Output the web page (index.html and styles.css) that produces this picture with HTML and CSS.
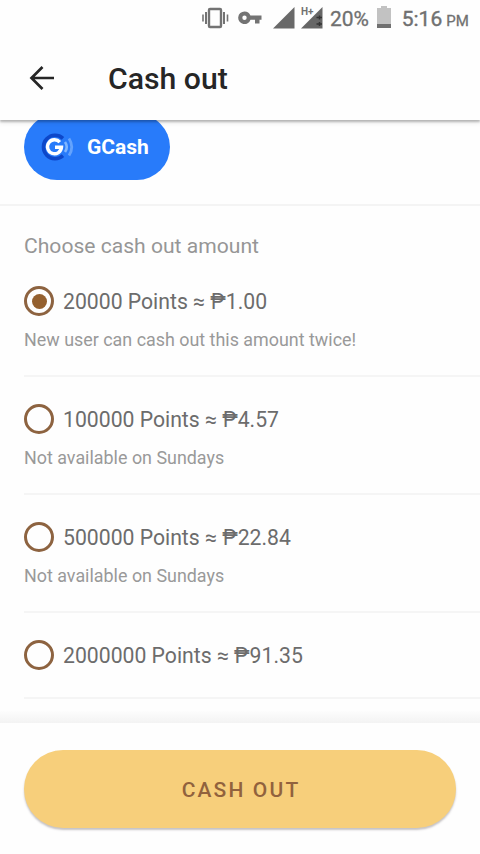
FILE: index.html
```html
<!DOCTYPE html>
<html lang="en">
<head>
<meta charset="utf-8">
<title>Cash out</title>
<link rel="stylesheet" href="styles.css">
</head>
<body>
<div class="screen">
  <header class="top">
    <div class="status">
      <svg class="i-vibrate" width="28" height="22" viewBox="0 0 28 22">
        <rect x="8" y="2" width="12" height="18" rx="1" fill="none" stroke="#737373" stroke-width="2.400"/>
        <path d="M5 5V17M23 5V17" stroke="#737373" stroke-width="2"/>
        <path d="M2 7.500V14.500M26.500 7.500V14.500" stroke="#737373" stroke-width="1.600"/>
      </svg>
      <svg class="i-key" width="24" height="14" viewBox="0 0 24 14">
        <path fill="#737373" fill-rule="evenodd" d="M6.500.500a6.300 6.300 0 0 1 5.900 4H23.500V8.700H21.500V12.500H17V8.700H12.500A6.300 6.300 0 1 1 6.500.500ZM6.500 4.600a2.200 2.200 0 1 0 0 4.400a2.200 2.200 0 0 0 0-4.400Z"/>
      </svg>
      <svg class="i-signal" width="22" height="22" viewBox="0 0 22 22"><path d="M0 21.500L21.500 0V21.500Z" fill="#696969"/></svg>
      <span class="network">
        <svg width="22" height="22" viewBox="0 0 22 22"><path d="M0 21.500L21.500 0V21.500Z" fill="#666"/><path d="M15.500 10.500H21M18.500 8.500v4M15.500 17H21M18.500 15v4" stroke="#333" stroke-width="1.500"/></svg>
        <span class="network-label">H+</span>
      </span>
      <span class="percent">20%</span>
      <svg class="i-battery" width="14" height="22" viewBox="0 0 14 22"><path d="M0 2h4V0h6v2h4v20H0Z" fill="#c2c2c2"/><path d="M0 18h14v4H0Z" fill="#707070"/></svg>
      <span class="clock">5:16</span><span class="meridiem">PM</span>
    </div>
    <div class="toolbar">
      <svg class="i-back" width="26" height="26" viewBox="0 0 26 26"><path d="M25 13H2.500M13.500 2L2.500 13L13.500 24" fill="none" stroke="#262626" stroke-width="2.700"/></svg>
      <h1 class="title">Cash out</h1>
    </div>
  </header>
  <main class="content">
    <section class="method">
      <div class="pill">
        <svg class="i-gcash" width="34" height="28" viewBox="0 0 34 28">
          <path d="M22 5.300A11.700 11.700 0 1 0 22 22.700" fill="none" stroke="#0d47c9" stroke-width="3.600"/>
          <path d="M18.800 9.200A7 7 0 1 0 20.500 14.200H14" fill="none" stroke="#fff" stroke-width="3.400"/>
          <path d="M24 9Q27.500 14 24 19" fill="none" stroke="#7fb6ff" stroke-width="2.600"/>
          <path d="M28 5.500Q33.500 14 28 22.500" fill="none" stroke="#64a3fd" stroke-width="2.800"/>
        </svg>
        <span class="pill-label">GCash</span>
      </div>
    </section>
    <section class="amounts">
      <h2 class="heading">Choose cash out amount</h2>
      <div class="option first"><div class="choice"><i class="radio checked"></i><span class="label">20000 Points ≈ ₱1.00</span></div><p class="note">New user can cash out this amount twice!</p></div>
      <div class="option"><div class="choice"><i class="radio"></i><span class="label">100000 Points ≈ ₱4.57</span></div><p class="note">Not available on Sundays</p></div>
      <div class="option"><div class="choice"><i class="radio"></i><span class="label">500000 Points ≈ ₱22.84</span></div><p class="note">Not available on Sundays</p></div>
      <div class="option"><div class="choice"><i class="radio"></i><span class="label">2000000 Points ≈ ₱91.35</span></div></div>
    </section>
  </main>
  <footer class="bottom"><button class="submit">CASH OUT</button></footer>
</div>
</body>
</html>
```

FILE: styles.css
```css
* { box-sizing: border-box; }
body { margin: 0; background: #fefefe; font-family: Roboto, "Liberation Sans", sans-serif; }
h1, h2, p { margin: 0; font-weight: 400; }
svg { display: block; flex: none; }
.screen { width: 480px; height: 854px; display: flex; flex-direction: column; overflow: hidden; }
.top { height: 120px; flex: none; background: #fefefe; position: relative; z-index: 1; box-shadow: 0 2px 2px rgba(0,0,0,.24), 0 3px 5px rgba(0,0,0,.08); }
.status { height: 36px; display: flex; align-items: center; padding-left: 201px; color: #707070; font-size: 21px; font-weight: 500; white-space: nowrap; }
.i-key { margin-left: 9px; }
.i-signal { margin-left: 11px; }
.network { position: relative; margin-left: 6px; }
.network-label { position: absolute; left: 0; top: 0; font-size: 10px; line-height: 10px; font-weight: 700; }
.percent { margin: 2px 0 0 7px; letter-spacing: -.1px; font-weight: 400; -webkit-text-stroke: .3px #707070; }
.i-battery { margin-left: 8px; margin-top: -2px; }
.clock { margin: 2px 0 0 11px; font-weight: 400; -webkit-text-stroke: .4px #707070; }
.meridiem { font-size: 15px; margin: 5px 0 0 4px; font-weight: 400; -webkit-text-stroke: .3px #707070; }
.toolbar { height: 84px; display: flex; align-items: center; padding: 0 0 0 29px; }
.title { margin: 2px 0 0 53px; font-size: 30.200px; line-height: 36px; font-weight: 500; color: #262626; }
.content { flex: 1; min-height: 0; overflow: hidden; background: #fefefe; }
.method { display: flow-root; height: 86px; padding: 0 24px; border-bottom: 2px solid #f4f4f4; }
.pill { width: 146px; height: 66px; margin-top: -6px; border-radius: 33px; background: #287bfa; display: flex; align-items: center; padding-left: 17px; }
.pill-label { margin-left: 12px; font-size: 21px; font-weight: 700; color: #fff; }
.amounts { padding-left: 24px; }
.heading { padding-top: 26px; font-size: 21.100px; line-height: 28px; color: #969696; }
.option { height: 118px; border-bottom: 2px solid #f5f5f5; padding-top: 27px; }
.option.first { height: 117px; padding-top: 26px; }
.option:last-child { height: 86px; }
.choice { height: 30px; display: flex; align-items: center; gap: 9px; }
.radio { width: 30px; height: 30px; border: 3px solid #8d6340; border-radius: 50%; padding: 4.500px; }
.radio.checked { background: #94602f content-box; }
.label { font-size: 21.200px; color: #6c6c6c; }
.note { margin-top: 12px; font-size: 17.900px; line-height: 24px; color: #999; }
.bottom { height: 131px; flex: none; background: #fefefe; padding: 27px 24px 0; position: relative; }
.bottom::before { content: ""; position: absolute; left: 0; right: 0; bottom: 100%; height: 12px; background: linear-gradient(#fdfdfd, #f3f3f3); }
.submit { display: block; width: 432px; height: 78px; border: 0; border-radius: 39px; background: #f7cf7b; color: #91623d; font: 500 21px Roboto, "Liberation Sans", sans-serif; letter-spacing: 2.150px; padding: 2px 0 0 2px; box-shadow: 0 2px 2px rgba(70,60,65,.3); }
```
